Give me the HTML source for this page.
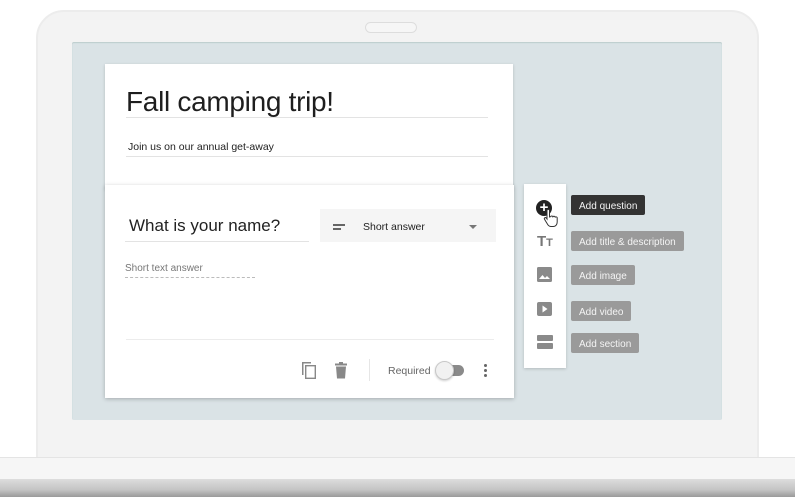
<!DOCTYPE html>
<html><head><meta charset="utf-8"><style>
*{margin:0;padding:0;box-sizing:border-box}
body{width:795px;height:497px;overflow:hidden;background:#fff;font-family:"Liberation Sans",Arial,sans-serif;position:relative}
.abs{position:absolute}
.bezel{left:36px;top:10px;width:723px;height:460px;background:#f3f3f3;border:2px solid #ececec;border-radius:28px 28px 0 0}
.cam{left:365px;top:22px;width:52px;height:11px;border:1px solid #ddd;border-radius:6px;background:#f6f6f6}
.screen{left:72px;top:42px;width:650px;height:378px;background:#dae3e6;border-radius:2px;box-shadow:inset 0 1px 1px #bcc}
.base1{left:0;top:457px;width:795px;height:22px;background:#f6f6f6;border-top:1px solid #e4e4e4}
.base2{left:0;top:479px;width:795px;height:18px;background:linear-gradient(#ddd,#c4c4c4 60%,#9a9a9a)}
.card{background:#fff;box-shadow:0 1px 3px rgba(0,0,0,.18)}
.t{color:#222;white-space:nowrap}
.line{height:1px;background:#e3e3e3}
.tip{height:20px;font-size:10px;color:#f4f4f4;background:#9a9a9a;border-radius:2px;padding:2px 8px 0;display:flex;align-items:center;white-space:nowrap}
</style></head><body>
<div class="abs bezel"></div>
<div class="abs cam"></div>
<div class="abs screen"></div>
<div class="abs base1"></div>
<div class="abs base2"></div>

<div class="abs card" style="left:105px;top:64px;width:408px;height:125px"></div>
<div class="abs t" style="left:126px;top:86px;font-size:28px;color:#1e1e1e;letter-spacing:-0.3px">Fall camping trip!</div>
<div class="abs line" style="left:126px;top:117px;width:362px"></div>
<div class="abs t" style="left:128px;top:141px;font-size:10.5px">Join us on our annual get-away</div>
<div class="abs line" style="left:126px;top:156px;width:362px"></div>

<div class="abs card" style="left:105px;top:185px;width:409px;height:213px;box-shadow:0 1px 4px rgba(0,0,0,.25)"></div>
<div class="abs t" style="left:129px;top:216px;font-size:17px">What is your name?</div>
<div class="abs line" style="left:125px;top:241px;width:184px"></div>
<div class="abs" style="left:320px;top:209px;width:176px;height:33px;background:#f5f5f5"></div>
<div class="abs" style="left:333px;top:224px;width:12px;height:1.5px;background:#666"></div>
<div class="abs" style="left:333px;top:228px;width:8px;height:1.5px;background:#666"></div>
<div class="abs t" style="left:363px;top:221px;font-size:10.5px">Short answer</div>
<div class="abs" style="left:469px;top:225px;width:0;height:0;border-left:4px solid transparent;border-right:4px solid transparent;border-top:4px solid #777"></div>
<div class="abs t" style="left:125px;top:263px;font-size:10px;color:#777">Short text answer</div>
<div class="abs" style="left:125px;top:277px;width:130px;border-top:1px dashed #bbb"></div>
<div class="abs line" style="left:126px;top:339px;width:368px;background:#ececec"></div>
<svg class="abs" style="left:300px;top:361px" width="18" height="19" viewBox="0 0 18 19"><path d="M2 1h9v1.5H3.5V14H2z" fill="#888"/><rect x="5.7" y="4.7" width="9.6" height="12.6" fill="none" stroke="#888" stroke-width="1.4"/></svg>
<svg class="abs" style="left:334px;top:362px" width="14" height="17" viewBox="0 0 14 17"><rect x="1" y="1.5" width="12" height="2" fill="#888"/><rect x="5" y="0" width="4" height="2" fill="#888"/><path d="M2 4.5h10l-1 12H3z" fill="#888"/></svg>
<div class="abs" style="left:369px;top:359px;width:1px;height:22px;background:#e6e6e6"></div>
<div class="abs t" style="left:388px;top:365px;font-size:10.5px;color:#666">Required</div>
<div class="abs" style="left:441px;top:365px;width:23px;height:11px;border-radius:6px;background:#8a8a8a"></div>
<div class="abs" style="left:435px;top:361px;width:19px;height:19px;border-radius:50%;background:#f1f1f1;border:1px solid #c8c8c8;box-shadow:0 1px 2px rgba(0,0,0,.2)"></div>
<div class="abs" style="left:484px;top:364px;width:3px;height:3px;border-radius:50%;background:#666;box-shadow:0 5px 0 #666,0 10px 0 #666"></div>

<div class="abs card" style="left:524px;top:184px;width:42px;height:184px"></div>
<div class="abs" style="left:536px;top:200px;width:16px;height:16px;border-radius:50%;background:#222;color:#fff;font-size:15px;line-height:15px;text-align:center;font-weight:bold">+</div>
<svg class="abs" style="left:543px;top:208px" width="16" height="20" viewBox="0 0 16 20"><path d="M4 2.5c0-1.5 2.5-1.5 2.5 0V9l1-.3c.5-1 2-1 2.4.1 .6-.8 2-.7 2.3.3 .8-.5 2-.2 2 .8V14c0 2.5-1.5 4.5-4 4.5H8c-1.5 0-2.5-.8-3.3-2L1.5 11.3c-.7-1.2.8-2.3 1.8-1.3L4 11z" fill="#fff" stroke="#333" stroke-width="1"/></svg>
<div class="abs t" style="left:537px;top:233px;font-size:15px;color:#777;font-weight:bold">T<span style="font-size:11px">T</span></div>
<svg class="abs" style="left:537px;top:267px" width="15" height="15" viewBox="0 0 15 15"><rect width="15" height="15" rx="1.5" fill="#8a8a8a"/><path d="M2 12l3.5-4 2.5 3 2-2 3 3z" fill="#fff"/></svg>
<svg class="abs" style="left:537px;top:302px" width="15" height="14" viewBox="0 0 15 14"><rect width="15" height="14" rx="2" fill="#8a8a8a"/><path d="M5.5 3.5l5 3.5-5 3.5z" fill="#fff"/></svg>
<div class="abs" style="left:537px;top:335px;width:16px;height:6px;background:#8a8a8a;border-radius:1px"></div>
<div class="abs" style="left:537px;top:343px;width:16px;height:6px;background:#8a8a8a;border-radius:1px"></div>

<div class="abs tip" style="left:571px;top:195px;background:#333">Add question</div>
<div class="abs tip" style="left:571px;top:231px">Add title &amp; description</div>
<div class="abs tip" style="left:571px;top:265px">Add image</div>
<div class="abs tip" style="left:571px;top:301px">Add video</div>
<div class="abs tip" style="left:571px;top:333px">Add section</div>
</body></html>
